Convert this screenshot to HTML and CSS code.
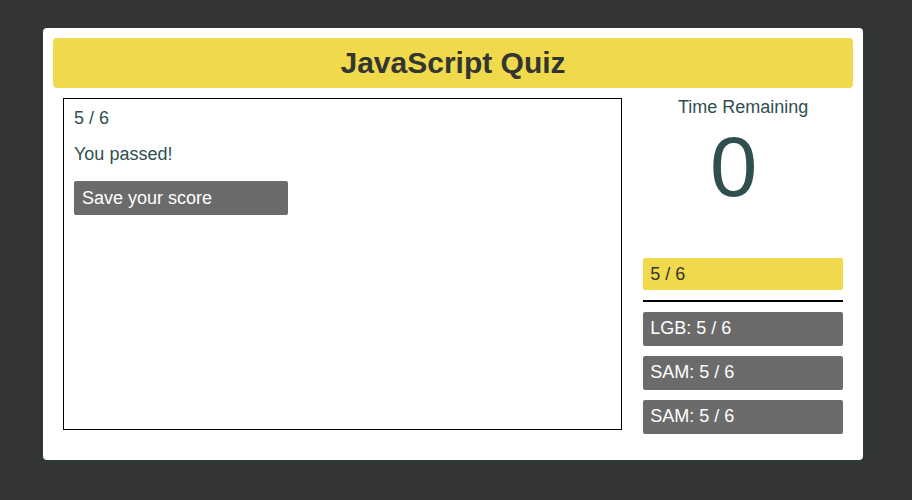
FILE: index.html
```html
<!DOCTYPE html>
<html>
<head>
<meta charset="utf-8">
<link rel="stylesheet" href="styles.css">
</head>
<body>
<div class="card">
  <header class="header"><h1 class="title">JavaScript Quiz</h1></header>
  <div class="main">
    <section class="quiz">
      <p class="progress">5 / 6</p>
      <p class="result">You passed!</p>
      <button class="save">Save your score</button>
    </section>
    <aside class="side">
      <div class="timer-label">Time Remaining</div>
      <div class="timer">0</div>
      <div class="current">5 / 6</div>
      <div class="divider"></div>
      <ul class="scores">
        <li class="score">LGB: 5 / 6</li>
        <li class="score">SAM: 5 / 6</li>
        <li class="score">SAM: 5 / 6</li>
      </ul>
    </aside>
  </div>
</div>
</body>
</html>
```
FILE: styles.css
```css
* { box-sizing: border-box; }
html, body { margin: 0; padding: 0; }
body {
  background: #333533;
  font-family: "Liberation Sans", Arial, sans-serif;
  color: #2f4f4f;
  height: 500px;
  overflow: hidden;
}
.card {
  margin: 28px 0 0 43px;
  width: 820px;
  height: 432px;
  background: #fff;
  border-radius: 4px;
  padding: 10px;
  box-shadow: 0 2px 3px rgba(40, 70, 65, 0.6);
}
.header {
  height: 50px;
  background: #f0d94a;
  border-radius: 4px;
  display: flex;
  align-items: center;
  justify-content: center;
}
.title {
  margin: 0;
  font-size: 30px;
  font-weight: bold;
  color: #333533;
}
.main {
  display: flex;
  gap: 21px;
  margin: 10px 10px 0 10px;
}
.quiz {
  width: 560px;
  height: 332px;
  border: 1px solid #000;
  padding: 9px 10px;
}
.progress, .result {
  margin: 0;
  font-size: 18px;
  line-height: 21px;
}
.result { margin-top: 15px; }
.save {
  display: block;
  margin-top: 16px;
  width: 214px;
  height: 34px;
  background: #6b6b6b;
  color: #fff;
  border: none;
  border-radius: 2px;
  font-family: "Liberation Sans", Arial, sans-serif;
  font-size: 18px;
  line-height: 32px;
  text-align: left;
  padding: 0 8px;
}
.side {
  width: 200px;
  display: flex;
  flex-direction: column;
}
.timer-label {
  text-align: center;
  font-size: 18px;
  line-height: 20px;
  margin-top: -1px;
}
.timer {
  text-align: center;
  font-size: 85px;
  line-height: 85px;
  margin-top: 7px;
  padding-right: 19px;
}
.current {
  margin-top: 49px;
  height: 32px;
  background: #f0d94a;
  border-radius: 2px;
  color: #333533;
  font-size: 18px;
  line-height: 32px;
  padding: 0 7px;
}
.divider {
  margin-top: 10px;
  height: 2px;
  background: #000;
}
.scores {
  list-style: none;
  margin: 10px 0 0 0;
  padding: 0;
  display: flex;
  flex-direction: column;
  gap: 10px;
}
.score {
  height: 34px;
  background: #6b6b6b;
  color: #fff;
  border-radius: 2px;
  font-size: 18px;
  line-height: 32px;
  padding: 0 7px;
}
```
